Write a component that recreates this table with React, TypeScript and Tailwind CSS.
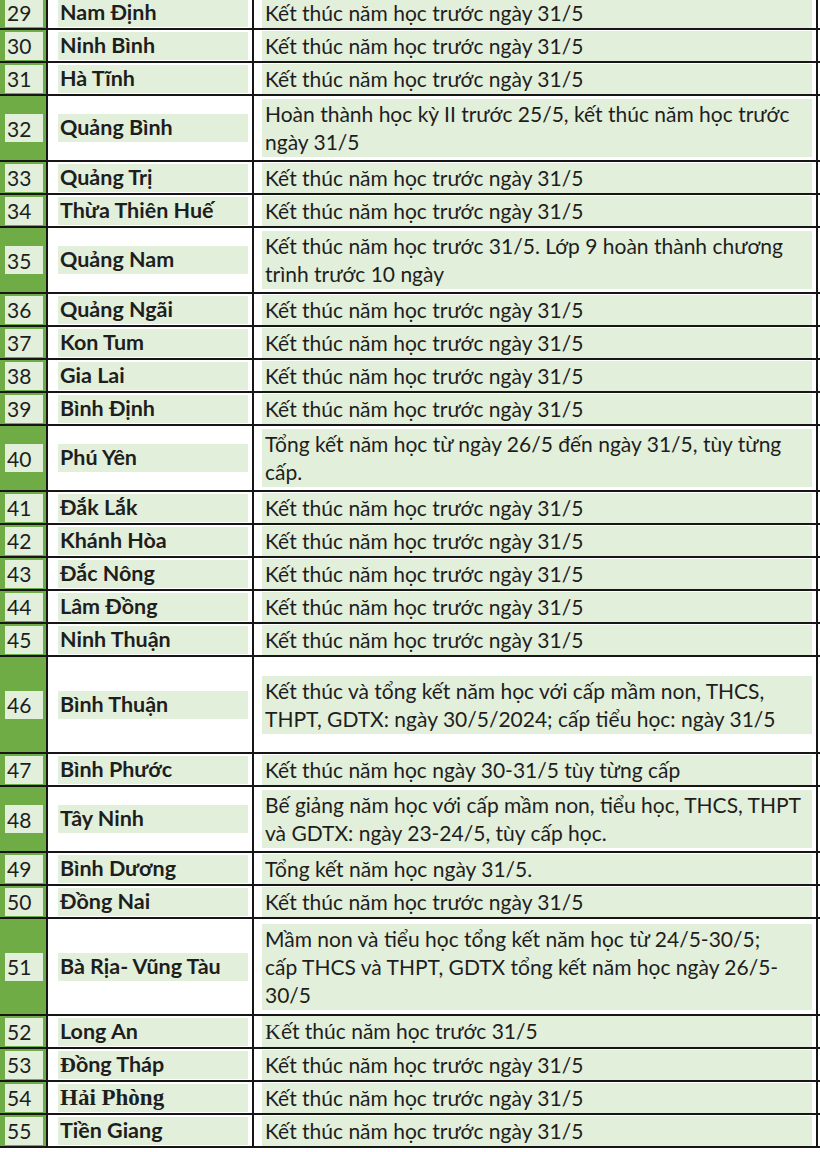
import React from 'react';

type Row = {
  no: number;
  name: React.ReactNode;
  desc: React.ReactNode[];
  h: string;
};

const std = 'Kết thúc năm học trước ngày 31/5';

const rows: Row[] = [
  { no: 29, name: 'Nam Định', desc: [std], h: 'h-[31px]' },
  { no: 30, name: 'Ninh Bình', desc: [std], h: 'h-[31px]' },
  { no: 31, name: 'Hà Tĩnh', desc: [std], h: 'h-[31px]' },
  {
    no: 32,
    name: 'Quảng Bình',
    desc: ['Hoàn thành học kỳ II trước 25/5, kết thúc năm học trước', 'ngày 31/5'],
    h: 'h-[64px]'
  },
  { no: 33, name: 'Quảng Trị', desc: [std], h: 'h-[31px]' },
  { no: 34, name: 'Thừa Thiên Huế', desc: [std], h: 'h-[31px]' },
  {
    no: 35,
    name: 'Quảng Nam',
    desc: ['Kết thúc năm học trước 31/5. Lớp 9 hoàn thành chương', 'trình trước 10 ngày'],
    h: 'h-[64px]'
  },
  { no: 36, name: 'Quảng Ngãi', desc: [std], h: 'h-[31px]' },
  { no: 37, name: 'Kon Tum', desc: [std], h: 'h-[31px]' },
  { no: 38, name: 'Gia Lai', desc: [std], h: 'h-[31px]' },
  { no: 39, name: 'Bình Định', desc: [std], h: 'h-[31px]' },
  {
    no: 40,
    name: 'Phú Yên',
    desc: ['Tổng kết năm học từ ngày 26/5 đến ngày 31/5, tùy từng', 'cấp.'],
    h: 'h-[64px]'
  },
  { no: 41, name: 'Đắk Lắk', desc: [std], h: 'h-[31px]' },
  { no: 42, name: 'Khánh Hòa', desc: [std], h: 'h-[31px]' },
  { no: 43, name: 'Đắc Nông', desc: [std], h: 'h-[31px]' },
  { no: 44, name: 'Lâm Đồng', desc: [std], h: 'h-[31px]' },
  { no: 45, name: 'Ninh Thuận', desc: [std], h: 'h-[31px]' },
  {
    no: 46,
    name: 'Bình Thuận',
    desc: [
      'Kết thúc và tổng kết năm học với cấp mầm non, THCS,',
      'THPT, GDTX: ngày 30/5/2024; cấp tiểu học: ngày 31/5'
    ],
    h: 'h-[95px]'
  },
  { no: 47, name: 'Bình Phước', desc: ['Kết thúc năm học ngày 30-31/5 tùy từng cấp'], h: 'h-[31px]' },
  {
    no: 48,
    name: 'Tây Ninh',
    desc: ['Bế giảng năm học với cấp mầm non, tiểu học, THCS, THPT', 'và GDTX: ngày 23-24/5, tùy cấp học.'],
    h: 'h-[64px]'
  },
  { no: 49, name: 'Bình Dương', desc: ['Tổng kết năm học ngày 31/5.'], h: 'h-[31px]' },
  { no: 50, name: 'Đồng Nai', desc: [std], h: 'h-[31px]' },
  {
    no: 51,
    name: 'Bà Rịa- Vũng Tàu',
    desc: [
      'Mầm non và tiểu học tổng kết năm học từ 24/5-30/5;',
      'cấp THCS và THPT, GDTX tổng kết năm học ngày 26/5-',
      '30/5'
    ],
    h: 'h-[95px]'
  },
  {
    no: 52,
    name: 'Long An',
    desc: [
      <>
        <span className="font-['Liberation_Serif',serif] text-[22px]">K</span>ết thúc năm học trước 31/5
      </>
    ],
    h: 'h-[31px]'
  },
  {
    no: 53,
    name: (
      <>
        <span className="font-['Liberation_Serif',serif] text-[22px]">Đ</span>ồng Tháp
      </>
    ),
    desc: [std],
    h: 'h-[31px]'
  },
  {
    no: 54,
    name: <span className="font-['Liberation_Serif',serif] text-[23px]">Hải Phòng</span>,
    desc: [std],
    h: 'h-[31px]'
  },
  { no: 55, name: 'Tiền Giang', desc: [std], h: 'h-[31px]' }
];

function TableRow({ row }: { row: Row }) {
  return (
    <div className="flex border-b-2 border-[#161616]">
      {/* STT */}
      <div className={`${row.h} flex w-[46px] shrink-0 items-center bg-[#6fac46] pl-[5px] pr-[3px]`}>
        <div className="flex h-[28px] w-full items-center bg-[#e2efda] pl-[2px] leading-none">
          {row.no}
        </div>
      </div>
      <div className="w-[2px] shrink-0 bg-[#161616]" />

      {/* Tỉnh */}
      <div className={`${row.h} flex w-[204px] shrink-0 items-center bg-white pl-[10px] pr-[4px]`}>
        <div className="flex h-[28px] w-full items-center bg-[#e2efda] pl-[2px] text-[21.5px] font-bold leading-none">
          <span>{row.name}</span>
        </div>
      </div>
      <div className="w-[2px] shrink-0 bg-[#161616]" />

      {/* Nội dung */}
      <div className={`${row.h} flex w-[562px] shrink-0 items-center bg-white pl-[8px] pr-[4px]`}>
        <div className="w-full bg-[#e2efda] py-[1px] pl-[3px] leading-[28px]">
          {row.desc.map((line, i) => (
            <div key={i} className="whitespace-nowrap">
              {line}
            </div>
          ))}
        </div>
      </div>
      <div className="w-[2px] shrink-0 bg-[#161616]" />
    </div>
  );
}

export default function App() {
  return (
    <div className="h-[1152px] w-[820px] overflow-hidden bg-white font-['Lato','Noto_Sans',sans-serif] text-[21px] text-[#1e1e1e]">
      <div className="-mt-[3px]">
        {rows.map((row) => (
          <TableRow key={row.no} row={row} />
        ))}
      </div>
    </div>
  );
}
